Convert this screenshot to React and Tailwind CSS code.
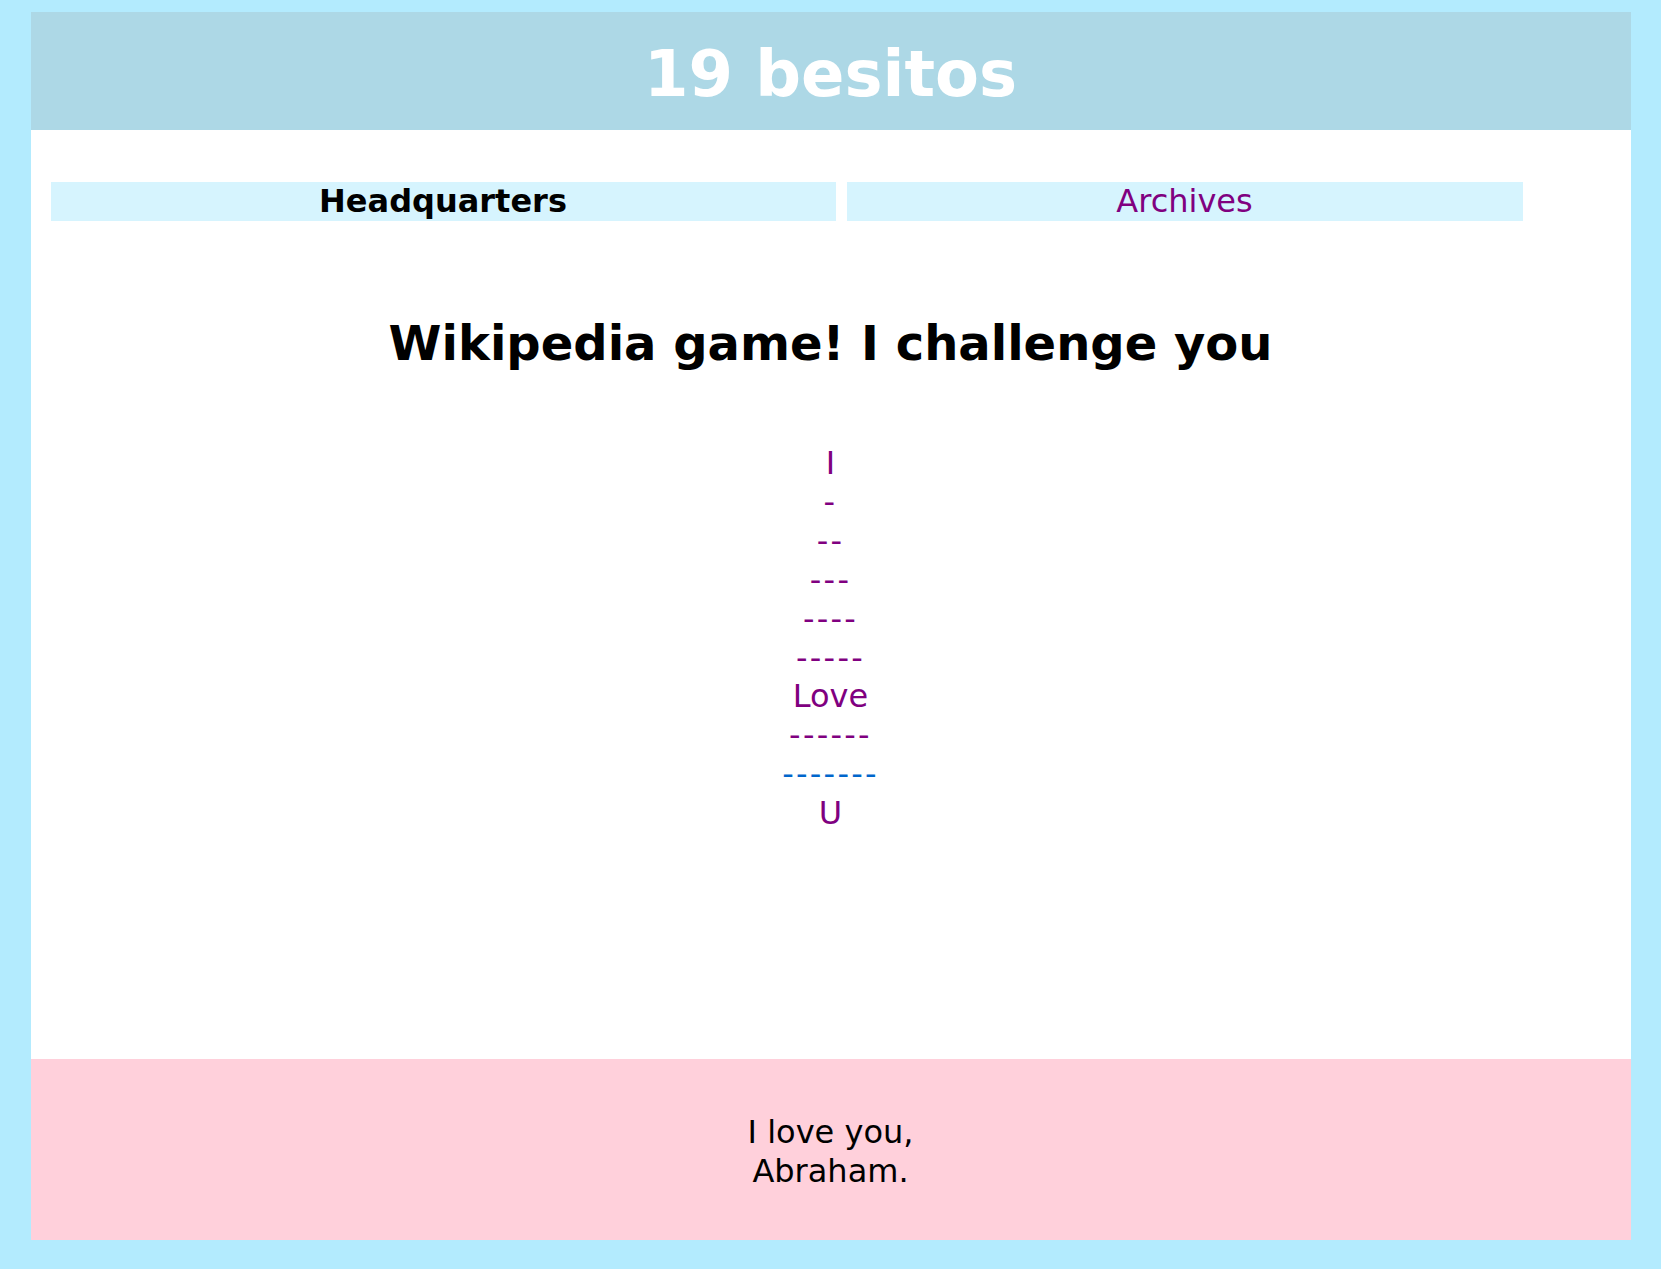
const font = { fontFamily: 'Verdana, "DejaVu Sans", sans-serif' };

const LINES = ['I', '-', '--', '---', '----', '-----', 'Love', '------', '-------', 'U'];

function NavTab({ children, className = '' }) {
  return (
    <div className={`h-[39px] bg-[#d6f4fe] flex items-center justify-center leading-[39px] ${className}`}>
      {children}
    </div>
  );
}

export default function App() {
  return (
    <div className="min-h-[1269px] bg-[#b3ebfe] pt-[12px] pb-[29px] text-[32px] text-black" style={font}>
      <div className="mx-auto w-[1600px] bg-white flex flex-col">
        <header className="bg-[#add8e6] pt-[23px] pb-[17px] text-center">
          <h1 className="text-[64px] font-bold leading-[78px] text-white">19 besitos</h1>
        </header>

        <main className="flex flex-col pt-[52px] pb-[226px]">
          <nav className="flex gap-[11px] pl-[20px]">
            <NavTab className="w-[785px] font-bold">Headquarters</NavTab>
            <NavTab className="w-[676px]">
              <a href="#" className="text-[#800080]">Archives</a>
            </NavTab>
          </nav>

          <h2 className="mt-[93px] text-center text-[48px] font-bold leading-[58px]">
            Wikipedia game! I challenge you
          </h2>

          <div className="mt-[72px] flex flex-col items-center leading-[38.9px]">
            {LINES.map((t, i) => (
              <a
                key={i}
                href="#"
                className={`${i === 8 ? 'text-[#0066cc]' : 'text-[#800080]'} ${t.startsWith('-') ? 'tracking-[2.25px]' : ''}`}
              >
                {t}
              </a>
            ))}
          </div>
        </main>

        <footer className="bg-[#ffd0db] pt-[54px] pb-[49px] text-center leading-[39px]">
          <p>I love you,</p>
          <p>Abraham.</p>
        </footer>
      </div>
    </div>
  );
}
